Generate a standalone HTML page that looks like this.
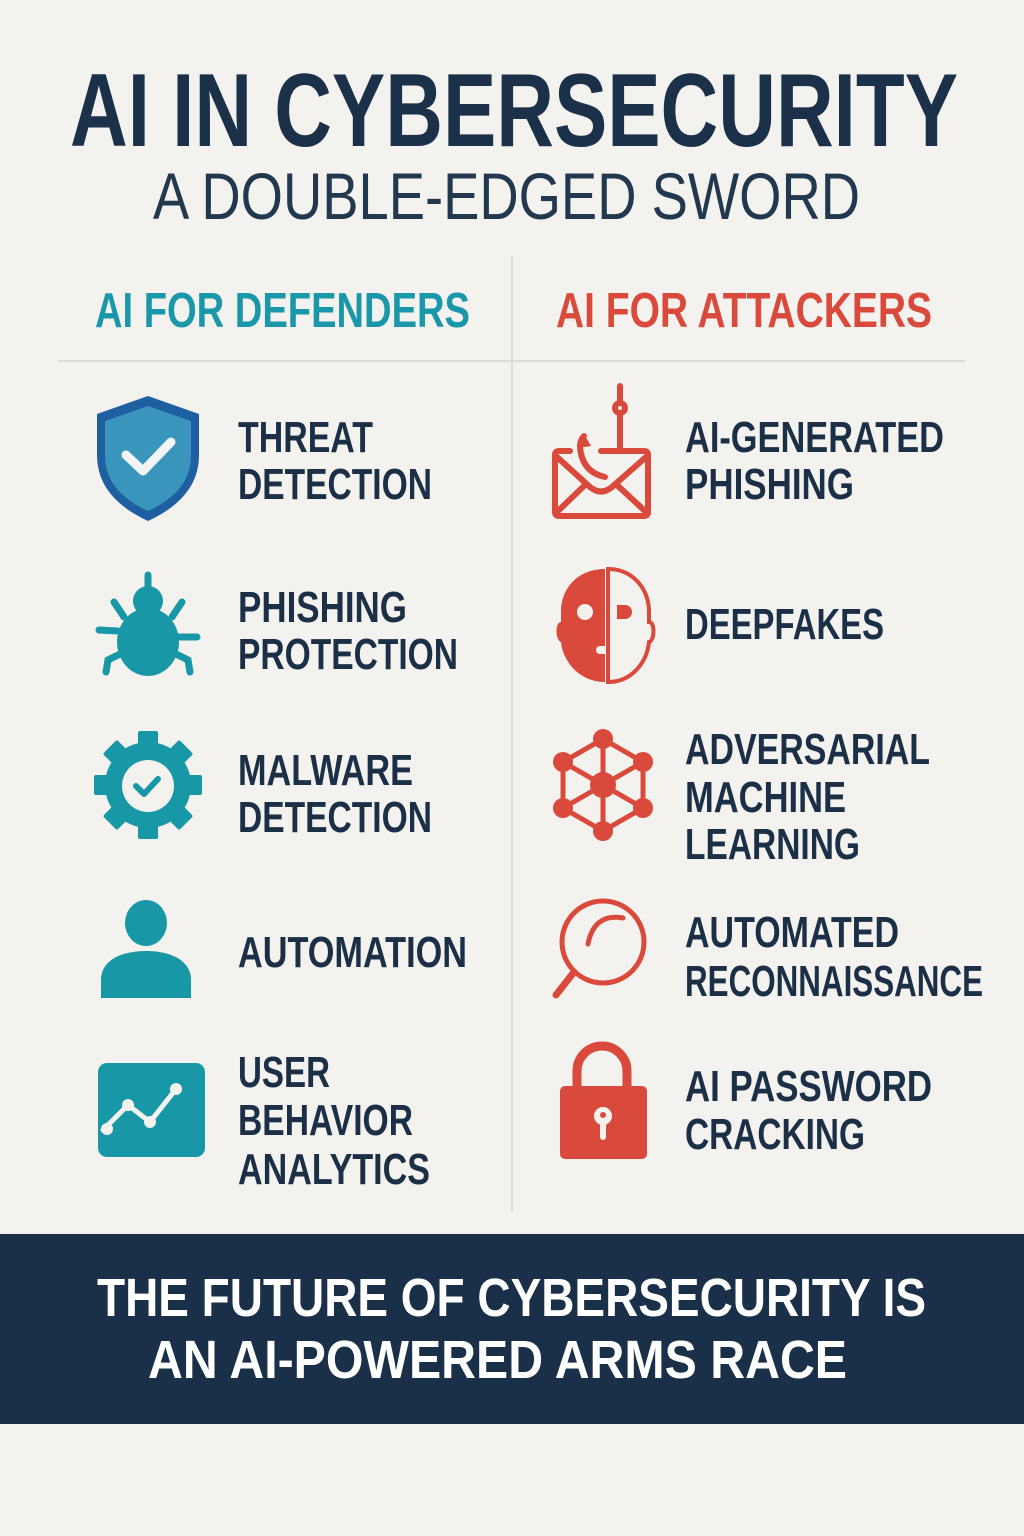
<!DOCTYPE html>
<html><head><meta charset="utf-8"><style>
html,body{margin:0;padding:0;background:#f3f2ee;}
svg{display:block}
text{font-family:"Liberation Sans","DejaVu Sans",sans-serif;}
.t{fill:#1b2f47;font-weight:bold;font-size:44px;}
</style></head><body>
<svg width="1024" height="1536" viewBox="0 0 1024 1536" xmlns="http://www.w3.org/2000/svg">
<rect width="1024" height="1536" fill="#f3f2ee"/>
<text x="70" y="146" font-size="104" font-weight="bold" fill="#1b3049" textLength="888" lengthAdjust="spacingAndGlyphs">AI IN CYBERSECURITY</text>
<text x="153" y="219" font-size="66" fill="#22384f" textLength="707" lengthAdjust="spacingAndGlyphs">A DOUBLE-EDGED SWORD</text>
<text x="95" y="327" font-size="49" font-weight="bold" fill="#1a97a8" textLength="375" lengthAdjust="spacingAndGlyphs">AI FOR DEFENDERS</text>
<text x="556" y="327" font-size="49" font-weight="bold" fill="#d94a3c" textLength="376" lengthAdjust="spacingAndGlyphs">AI FOR ATTACKERS</text>
<line x1="58" y1="361" x2="965" y2="361" stroke="#dcdbd6" stroke-width="2"/>
<line x1="512" y1="255" x2="512" y2="1212" stroke="#dcdbd6" stroke-width="2"/>

<g class="t">
<text class="t" x="238" y="452" textLength="135" lengthAdjust="spacingAndGlyphs">THREAT</text>
<text class="t" x="238" y="499" textLength="194" lengthAdjust="spacingAndGlyphs">DETECTION</text>
<text class="t" x="238" y="622" textLength="169" lengthAdjust="spacingAndGlyphs">PHISHING</text>
<text class="t" x="238" y="669" textLength="220" lengthAdjust="spacingAndGlyphs">PROTECTION</text>
<text class="t" x="238" y="785" textLength="175" lengthAdjust="spacingAndGlyphs">MALWARE</text>
<text class="t" x="238" y="832" textLength="194" lengthAdjust="spacingAndGlyphs">DETECTION</text>
<text class="t" x="238" y="967" textLength="229" lengthAdjust="spacingAndGlyphs">AUTOMATION</text>
<text class="t" x="238" y="1087" textLength="92" lengthAdjust="spacingAndGlyphs">USER</text>
<text class="t" x="238" y="1135" textLength="175" lengthAdjust="spacingAndGlyphs">BEHAVIOR</text>
<text class="t" x="238" y="1184" textLength="192" lengthAdjust="spacingAndGlyphs">ANALYTICS</text>

<text class="t" x="685" y="452" textLength="259" lengthAdjust="spacingAndGlyphs">AI-GENERATED</text>
<text class="t" x="685" y="499" textLength="169" lengthAdjust="spacingAndGlyphs">PHISHING</text>
<text class="t" x="685" y="639" textLength="199" lengthAdjust="spacingAndGlyphs">DEEPFAKES</text>
<text class="t" x="685" y="764" textLength="245" lengthAdjust="spacingAndGlyphs">ADVERSARIAL</text>
<text class="t" x="685" y="812" textLength="161" lengthAdjust="spacingAndGlyphs">MACHINE</text>
<text class="t" x="685" y="859" textLength="175" lengthAdjust="spacingAndGlyphs">LEARNING</text>
<text class="t" x="685" y="947" textLength="214" lengthAdjust="spacingAndGlyphs">AUTOMATED</text>
<text class="t" x="685" y="996" textLength="298" lengthAdjust="spacingAndGlyphs">RECONNAISSANCE</text>
<text class="t" x="685" y="1101" textLength="247" lengthAdjust="spacingAndGlyphs">AI PASSWORD</text>
<text class="t" x="685" y="1149" textLength="180" lengthAdjust="spacingAndGlyphs">CRACKING</text>
</g>

<!-- shield -->
<path d="M148 396 L199 414 L199 455 C199 488 176 508 148 521 C120 508 97 488 97 455 L97 414 Z" fill="#1d5fa0"/>
<path d="M148 406 L191 421 L191 456 C191 483 172 500 148 511 C124 500 105 483 105 456 L105 421 Z" fill="#3a95bd"/>
<path d="M126 455 L143 471 L171 442" fill="none" stroke="#f2f5f7" stroke-width="9" stroke-linecap="round" stroke-linejoin="round"/>
<!-- bug -->
<g fill="#1898a6" stroke="#1898a6" stroke-linecap="round">
<line x1="148" y1="575" x2="148" y2="590" stroke-width="7"/>
<circle cx="148" cy="601" r="15" stroke="none"/>
<ellipse cx="148" cy="642" rx="31" ry="34" stroke="none"/>
<path d="M114 602 L124 617 M182 602 L172 617 M99 630 L118 631 M197 637 L178 637 M106 672 L108 660 L124 652 M190 672 L188 660 L172 652" fill="none" stroke-width="7"/>
</g>
<!-- gear -->
<g fill="#1898a6">
<circle cx="148" cy="785" r="43"/>
<g>
<rect x="138" y="731" width="20" height="22" rx="2"/>
<rect x="138" y="731" width="20" height="22" rx="2" transform="rotate(45 148 785)"/>
<rect x="138" y="731" width="20" height="22" rx="2" transform="rotate(90 148 785)"/>
<rect x="138" y="731" width="20" height="22" rx="2" transform="rotate(135 148 785)"/>
<rect x="138" y="731" width="20" height="22" rx="2" transform="rotate(180 148 785)"/>
<rect x="138" y="731" width="20" height="22" rx="2" transform="rotate(225 148 785)"/>
<rect x="138" y="731" width="20" height="22" rx="2" transform="rotate(270 148 785)"/>
<rect x="138" y="731" width="20" height="22" rx="2" transform="rotate(315 148 785)"/>
</g>
</g>
<circle cx="148" cy="786" r="26" fill="#f3f2ee"/>
<path d="M136 786 L144 794 L158 779" fill="none" stroke="#1898a6" stroke-width="6" stroke-linecap="round" stroke-linejoin="round"/>
<!-- person -->
<g fill="#1898a6">
<ellipse cx="146" cy="923" rx="21" ry="23"/>
<path d="M101 998 L101 980 C101 960 122 951 146 951 C170 951 191 960 191 980 L191 998 Z"/>
</g>
<!-- chart -->
<rect x="98" y="1063" width="107" height="94" rx="9" fill="#1898a6"/>
<path d="M103 1130 L128 1105 L150 1122 L176 1089" fill="none" stroke="#f3f2ee" stroke-width="5" stroke-linecap="round" stroke-linejoin="round"/>
<g fill="#f3f2ee"><circle cx="107" cy="1129" r="6"/><circle cx="128" cy="1105" r="6"/><circle cx="150" cy="1122" r="6"/><circle cx="176" cy="1089" r="6"/></g>

<!-- envelope + hook -->
<g fill="none" stroke="#d94a3c" stroke-width="6" stroke-linecap="round" stroke-linejoin="round">
<line x1="620" y1="386" x2="620" y2="403"/>
<circle cx="620" cy="408" r="5"/>
<line x1="620" y1="414" x2="620" y2="451"/>
<path d="M601 451 L644 451 Q648 451 648 455 L648 512 Q648 516 644 516 L559 516 Q555 516 555 512 L555 455 Q555 451 559 451 L570 451"/>
<path d="M557 457 L590 487 Q601 496 612 487 L646 457"/>
<line x1="557" y1="512" x2="585" y2="485"/>
<line x1="646" y1="512" x2="617" y2="485"/>
<path d="M605 477 Q582 472 580 447 Q580 440 584 436"/>
</g>
<path d="M584 434 L578 448 L591 446 Z" fill="#d94a3c"/>
<!-- face -->
<path d="M605 569 C578 569 561 588 561 612 L561 622 C555 622 555 640 561 642 C563 662 580 682 605 682 Z" fill="#d94a3c"/>
<path d="M608 569 C632 569 649 588 649 612 L649 622 C655 622 655 640 649 642 C647 662 632 682 608 682 Z" fill="none" stroke="#d94a3c" stroke-width="4"/>
<circle cx="585" cy="612" r="8" fill="#f3f2ee"/>
<path d="M617 605 L625 605 A7 7 0 0 1 625 619 L617 619 Z" fill="#d94a3c"/>
<path d="M605 646 L600 646 A4 4 0 0 0 600 654 L605 654" fill="#f3f2ee"/>
<!-- network -->
<g stroke="#d94a3c" stroke-width="5" fill="none">
<path d="M603 739 L643 762 L643 808 L603 831 L563 808 L563 762 Z"/>
<path d="M603 739 L603 831 M563 762 L643 808 M643 762 L563 808"/>
</g>
<g fill="#d94a3c">
<circle cx="603" cy="739" r="10"/><circle cx="643" cy="762" r="10"/><circle cx="643" cy="808" r="10"/>
<circle cx="603" cy="831" r="10"/><circle cx="563" cy="808" r="10"/><circle cx="563" cy="762" r="10"/>
<circle cx="603" cy="785" r="13"/>
</g>
<!-- magnifier -->
<g fill="none" stroke="#d94a3c" stroke-linecap="round">
<circle cx="603" cy="942" r="41" stroke-width="5"/>
<path d="M623 918 Q594 913 588 944" stroke-width="5"/>
<line x1="574" y1="972" x2="556" y2="995" stroke-width="7"/>
</g>
<!-- lock -->
<path d="M577 1088 L577 1071 A25 25 0 0 1 627 1071 L627 1088" fill="none" stroke="#d94a3c" stroke-width="9"/>
<rect x="560" y="1086" width="87" height="73" rx="5" fill="#d94a3c"/>
<circle cx="603" cy="1116" r="9" fill="#f3f2ee"/>
<rect x="600" y="1116" width="6" height="24" rx="3" fill="#f3f2ee"/>
<circle cx="603" cy="1115" r="3" fill="#d94a3c"/>

<!-- footer -->
<rect x="0" y="1234" width="1024" height="190" fill="#1a3049"/>
<text x="97" y="1316" font-size="54" font-weight="bold" fill="#ffffff" textLength="829" lengthAdjust="spacingAndGlyphs">THE FUTURE OF CYBERSECURITY IS</text>
<text x="148" y="1378" font-size="54" font-weight="bold" fill="#ffffff" textLength="699" lengthAdjust="spacingAndGlyphs">AN AI-POWERED ARMS RACE</text>
</svg>
</body></html>
